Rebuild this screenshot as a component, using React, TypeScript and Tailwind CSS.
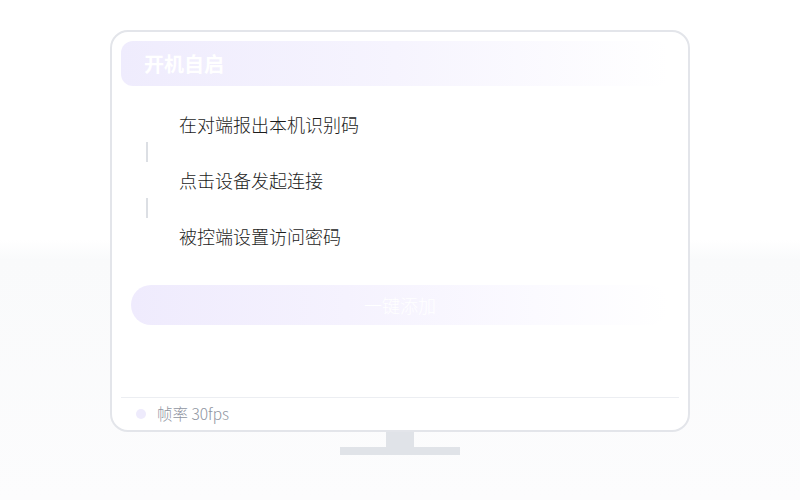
import React from "react";

const steps = ["在对端报出本机识别码", "点击设备发起连接", "被控端设置访问密码"];

export default function App() {
  return (
    <div
      className="w-[800px] h-[500px] flex flex-col items-center bg-[linear-gradient(to_bottom,#ffffff_0%,#ffffff_48%,#f9fafb_52%,#fcfcfd_100%)]"
      style={{ fontFamily: '"Noto Sans CJK SC", "Noto Sans", sans-serif' }}
    >
      <div className="mt-[30px] w-[580px] h-[402px] rounded-[18px] border-2 border-[#e3e5ea] bg-white p-[9px] pb-0 flex flex-col">
        <div className="h-[45px] rounded-[12px] bg-[linear-gradient(to_right,#efecfd_0%,#f6f4fe_50%,rgba(255,255,255,0)_100%)] flex items-center pl-[23px] mr-[10px]">
          <span className="text-[20px] font-bold text-white leading-none">开机自启</span>
        </div>
        <div className="mt-[26px] flex flex-col pl-[25px]">
          {steps.map((s, i) => (
            <div key={s} className="flex flex-col">
              <div className="h-6 flex items-center pl-[33px] text-[18px] font-light text-[#1c1c1c] leading-6">{s}</div>
              {i < steps.length - 1 && (
                <div className="h-8 flex items-center">
                  <div className="w-[2px] h-5 bg-[#dcdfe4]" />
                </div>
              )}
            </div>
          ))}
        </div>
        <div className="mt-[37px] mx-[10px] h-[40px] rounded-full bg-[linear-gradient(to_right,#efebfd_0%,#f5f2fe_40%,#fbfaff_75%,rgba(255,255,255,0)_100%)] flex items-center justify-center">
          <span className="text-[18px] font-light text-white">一键添加</span>
        </div>
        <div className="flex-1" />
        <div className="h-px bg-[#eceef2]" />
        <div className="h-[32px] flex items-center pl-[15px]">
          <div className="w-[10px] h-[10px] rounded-full bg-[#eeebfc]" />
          <span className="ml-[11px] text-[15.5px] font-light text-[#8f95a1]">帧率 30fps</span>
        </div>
      </div>
      <div className="w-[28px] h-[15px] bg-[#e0e3e8]" />
      <div className="w-[120px] h-[8px] bg-[#e0e3e8]" />
    </div>
  );
}
